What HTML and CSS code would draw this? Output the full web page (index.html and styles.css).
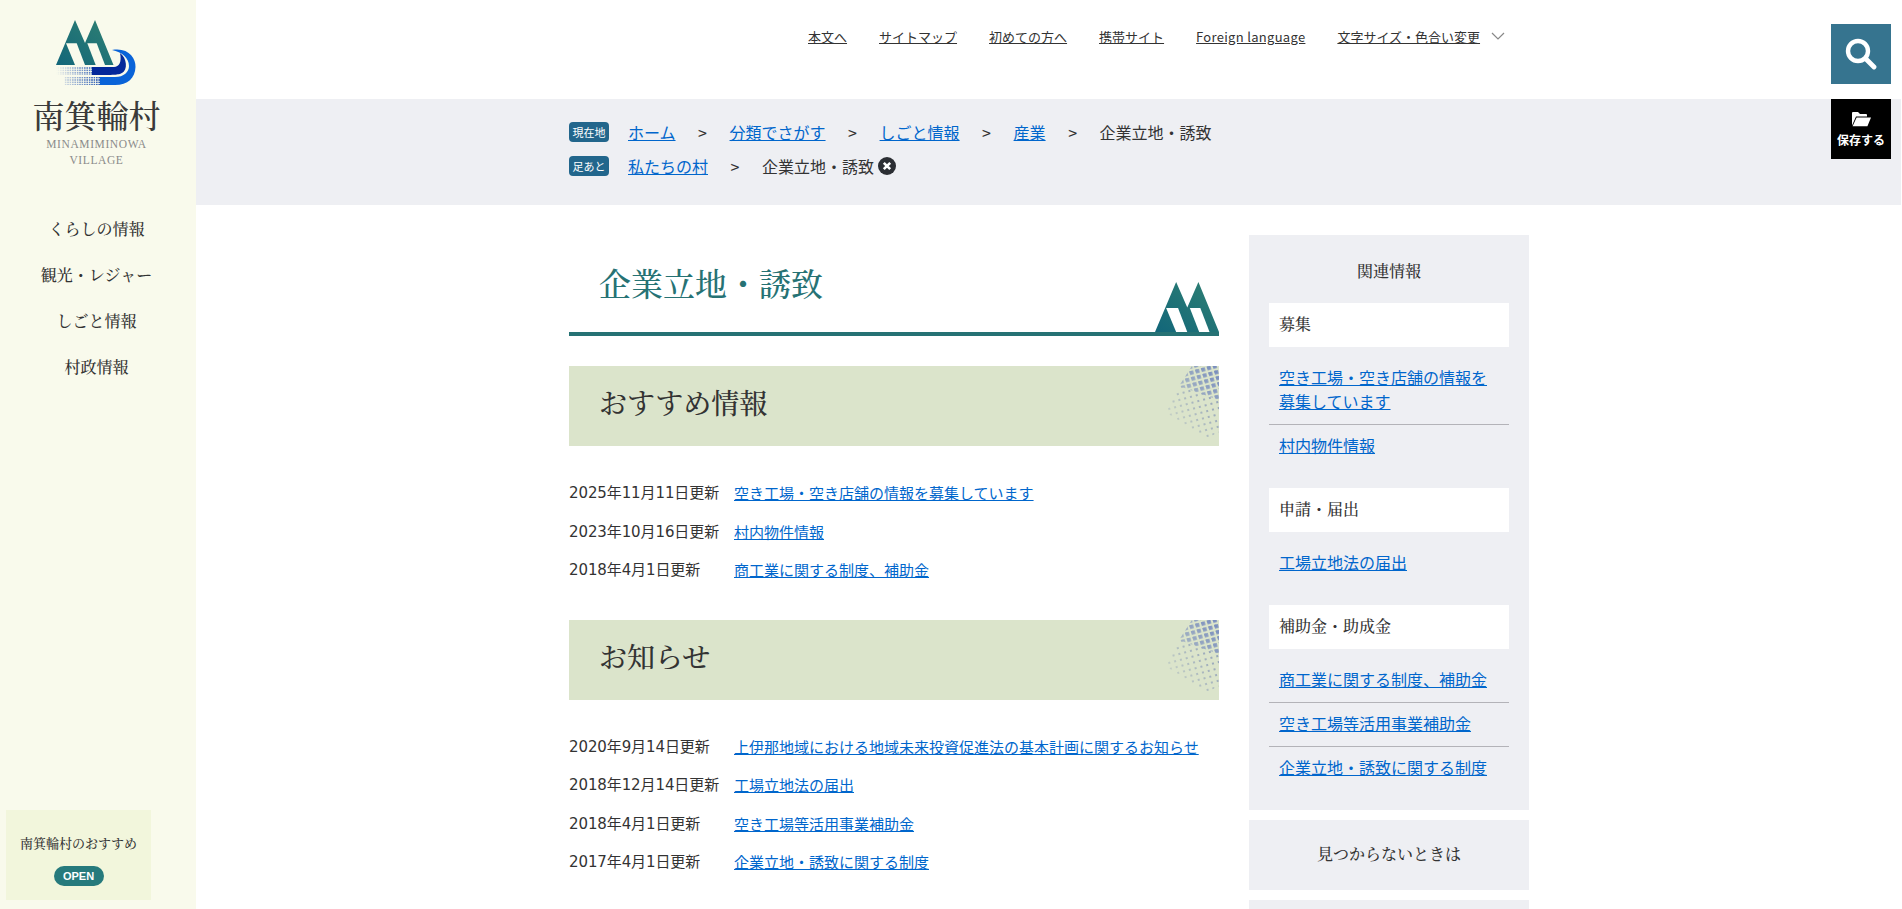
FILE: index.html
```html
<!DOCTYPE html>
<html lang="ja">
<head>
    <meta charset="UTF-8">
    <title>企業立地・誘致 | 南箕輪村</title>
    <link rel="stylesheet" href="styles.css">
</head>
<body>
    <aside class="side">
        <a class="logo" href="#">
            <svg class="logo-mark" viewBox="56 18 80 68">
                <defs>
                    <linearGradient id="teal" x1="0" y1="1" x2="1" y2="0">
                        <stop offset="0" stop-color="#12667a"/>
                        <stop offset="1" stop-color="#2f8072"/>
                    </linearGradient>
                    <linearGradient id="fade" x1="0" y1="0" x2="1" y2="0">
                        <stop offset="0" stop-color="#000"/>
                        <stop offset="1" stop-color="#fff"/>
                    </linearGradient>
                    <pattern id="dots" width="2.4" height="2.4" patternUnits="userSpaceOnUse">
                        <rect width="1.6" height="1.6" fill="#1d4fb0"/>
                    </pattern>
                    <mask id="dotmask" maskUnits="userSpaceOnUse" x="56" y="66" width="46" height="20">
                        <rect x="56" y="66" width="46" height="20" fill="url(#fade)"/>
                    </mask>
                    <linearGradient id="corner" x1="1" y1="0" x2="0" y2="1">
                        <stop offset="0" stop-color="#fff"/>
                        <stop offset="1" stop-color="#000"/>
                    </linearGradient>
                    <pattern id="ht-big" width="6" height="6" patternUnits="userSpaceOnUse" patternTransform="rotate(-15)">
                        <rect width="3.8" height="3.8" fill="#7489bd"/>
                    </pattern>
                    <pattern id="ht-small" width="6" height="6" patternUnits="userSpaceOnUse" patternTransform="rotate(-15)">
                        <rect width="2" height="2" fill="#7f90b4"/>
                    </pattern>
                    <mask id="ht-mask" maskUnits="userSpaceOnUse" x="0" y="0" width="56" height="80">
                        <rect width="56" height="80" fill="url(#corner)"/>
                    </mask>
                </defs>
                <polygon points="56,65 75,20 85,43 95,20 113.5,65" fill="url(#teal)"/>
                <polygon points="66,43.3 76.7,43.3 85,65 75,65" fill="#f9faec"/>
                <polygon points="87.3,43.3 96.7,43.3 105,65 95.7,65" fill="#f9faec"/>
                <rect x="56" y="67" width="37" height="8" fill="url(#dots)" mask="url(#dotmask)"/>
                <rect x="64" y="77" width="37" height="8" fill="url(#dots)" mask="url(#dotmask)"/>
                <path d="M112 50C128 47 136 58 135.500 67C135 78 128 85 115 85L100 85L100 77L115 77C124 77 129 72 129 66C129 58 122 52 112 50Z" fill="#0a63d8"/>
                <path d="M92 67L114 67C119 67 122 62 120 53C127 58 128 70 122 73C118 75 115 75 92 75Z" fill="#04289a"/>
            </svg>
            <span class="logo-name">南箕輪村</span>
            <span class="logo-en">MINAMIMINOWA<br>VILLAGE</span>
        </a>
        <nav class="side-nav">
            <a href="#">くらしの情報</a>
            <a href="#">観光・レジャー</a>
            <a href="#">しごと情報</a>
            <a href="#">村政情報</a>
        </nav>
        <div class="osusume">
            <p>南箕輪村のおすすめ</p>
            <span class="open">OPEN</span>
        </div>
    </aside>

    <div class="page">
        <header class="head">
            <a href="#">本文へ</a>
            <a href="#">サイトマップ</a>
            <a href="#">初めての方へ</a>
            <a href="#">携帯サイト</a>
            <a class="latin" href="#">Foreign language</a>
            <span class="head-last">
                <a href="#">文字サイズ・色合い変更</a>
                <svg class="chevron" viewBox="0 0 14 8" fill="none" stroke="#888" stroke-width="1.2"><polyline points="1 1 7 7 13 1"/></svg>
            </span>
        </header>

        <div class="crumbs">
            <div class="crumb-row">
                <span class="badge">現在地</span>
                <a href="#">ホーム</a><i>&gt;</i>
                <a href="#">分類でさがす</a><i>&gt;</i>
                <a href="#">しごと情報</a><i>&gt;</i>
                <a href="#">産業</a><i>&gt;</i>
                <span>企業立地・誘致</span>
            </div>
            <div class="crumb-row">
                <span class="badge">足あと</span>
                <a href="#">私たちの村</a><i>&gt;</i>
                <span>企業立地・誘致</span>
                <svg class="close" viewBox="0 0 18 18">
                    <circle cx="9" cy="9" r="9" fill="#2b2e33"/>
                    <path d="M5.8 5.8l6.4 6.4M12.2 5.8l-6.4 6.4" stroke="#fff" stroke-width="2.6"/>
                </svg>
            </div>
        </div>

        <div class="content">
            <main class="main">
                <h1 class="title">
                    <span>企業立地・誘致</span>
                    <svg class="title-mark" viewBox="56 20 57.5 45" preserveAspectRatio="none">
                        <polygon points="56,65 75,20 85,43 95,20 113.5,65" fill="url(#teal)"/>
                        <polygon points="66,43.3 76.7,43.3 85,65 75,65" fill="#fff"/>
                        <polygon points="87.3,43.3 96.7,43.3 105,65 95.7,65" fill="#fff"/>
                    </svg>
                </h1>

                <h2 class="band">
                    おすすめ情報
                    <svg class="halftone" viewBox="0 0 56 80">
                        <g mask="url(#ht-mask)">
                            <polygon points="29,0 56,0 56,66 44,72 2,46" fill="url(#ht-small)"/>
                            <polygon points="29,0 56,0 56,34 16,20" fill="url(#ht-big)"/>
                        </g>
                    </svg>
                </h2>
                <ul class="news">
                    <li><span>2025年11月11日更新</span><a href="#">空き工場・空き店舗の情報を募集しています</a></li>
                    <li><span>2023年10月16日更新</span><a href="#">村内物件情報</a></li>
                    <li><span>2018年4月1日更新</span><a href="#">商工業に関する制度、補助金</a></li>
                </ul>

                <h2 class="band">
                    お知らせ
                    <svg class="halftone" viewBox="0 0 56 80">
                        <g mask="url(#ht-mask)">
                            <polygon points="29,0 56,0 56,66 44,72 2,46" fill="url(#ht-small)"/>
                            <polygon points="29,0 56,0 56,34 16,20" fill="url(#ht-big)"/>
                        </g>
                    </svg>
                </h2>
                <ul class="news">
                    <li><span>2020年9月14日更新</span><a href="#">上伊那地域における地域未来投資促進法の基本計画に関するお知らせ</a></li>
                    <li><span>2018年12月14日更新</span><a href="#">工場立地法の届出</a></li>
                    <li><span>2018年4月1日更新</span><a href="#">空き工場等活用事業補助金</a></li>
                    <li><span>2017年4月1日更新</span><a href="#">企業立地・誘致に関する制度</a></li>
                </ul>
            </main>

            <div class="rail">
                <section class="panel">
                    <h2 class="panel-title">関連情報</h2>
                    <h3 class="panel-head">募集</h3>
                    <ul class="panel-list">
                        <li><a href="#">空き工場・空き店舗の情報を募集しています</a></li>
                        <li><a href="#">村内物件情報</a></li>
                    </ul>
                    <h3 class="panel-head">申請・届出</h3>
                    <ul class="panel-list">
                        <li><a href="#">工場立地法の届出</a></li>
                    </ul>
                    <h3 class="panel-head">補助金・助成金</h3>
                    <ul class="panel-list">
                        <li><a href="#">商工業に関する制度、補助金</a></li>
                        <li><a href="#">空き工場等活用事業補助金</a></li>
                        <li><a href="#">企業立地・誘致に関する制度</a></li>
                    </ul>
                </section>
                <section class="panel-small">見つからないときは</section>
                <section class="panel-rest"></section>
            </div>
        </div>
    </div>

    <a class="btn-search" href="#" aria-label="検索">
        <svg viewBox="0 0 32 32" fill="none" stroke="#fff">
            <circle cx="13" cy="13" r="10" stroke-width="4.4"/>
            <line x1="21" y1="21" x2="29" y2="29" stroke-width="4.8" stroke-linecap="round"/>
        </svg>
    </a>
    <a class="btn-save" href="#">
        <svg viewBox="0 0 20 16" fill="#fff">
            <path d="M1 14.5V2a1 1 0 0 1 1-1h5l2 2h6a1 1 0 0 1 1 1v1.5H5L1 14.5z"/>
            <path d="M5.6 6.6H20l-3.6 8.6H1.6z"/>
        </svg>
        保存する
    </a>
</body>
</html>
```

FILE: styles.css
```css
* {
    box-sizing: border-box;
}

html, body {
    height: 909px;
    overflow: hidden;
}

body {
    display: flex;
    margin: 0;
    background-color: #fff;
    color: #333;
    font-family: "Noto Sans CJK JP", "Noto Sans", sans-serif;
    font-size: 15px;
}

a {
    color: #0066cc;
}

ul {
    margin: 0;
    padding: 0;
    list-style: none;
}

/* 左サイド */
.side {
    display: flex;
    flex-direction: column;
    align-items: center;
    flex: none;
    width: 196px;
    height: 909px;
    padding-right: 3px;
    background-color: #f9faec;
    font-family: "Noto Serif CJK JP", "Liberation Serif", "Noto Sans CJK JP", serif;
}

.logo {
    display: flex;
    flex-direction: column;
    align-items: center;
    padding-top: 18px;
    color: #333;
    text-decoration: none;
}

.logo-mark {
    width: 80px;
    height: 68px;
}

.logo-name {
    margin-top: 8px;
    font-size: 32px;
    font-weight: 500;
    line-height: 40px;
    color: #3a3a3a;
}

.logo-en {
    margin-top: 2px;
    font-family: "Liberation Serif", serif;
    font-size: 11.5px;
    line-height: 16px;
    letter-spacing: 0.6px;
    text-align: center;
    color: #8a8a8a;
}

.side-nav {
    display: flex;
    flex-direction: column;
    align-items: center;
    margin-top: 38px;
}

.side-nav a {
    height: 46px;
    font-size: 16px;
    font-weight: 500;
    line-height: 46px;
    color: #333;
    text-decoration: none;
}

.osusume {
    align-self: flex-start;
    margin: auto 0 9px 6px;
    width: 145px;
    height: 90px;
    padding-top: 23px;
    background-color: #f2f6dc;
    text-align: center;
}

.osusume p {
    margin: 0 0 10px;
    font-size: 13px;
    font-weight: 500;
    line-height: 20px;
    color: #333;
}

.open {
    display: inline-block;
    width: 50px;
    height: 20px;
    border-radius: 10px;
    background-color: #267a7c;
    color: #fff;
    font-family: "Liberation Sans", sans-serif;
    font-size: 11px;
    font-weight: bold;
    line-height: 20px;
}

/* 右側 */
.page {
    flex: 1;
    min-width: 0;
}

.head {
    display: flex;
    align-items: center;
    gap: 32px;
    height: 99px;
    padding: 0 0 27px 612px;
    font-size: 13px;
}

.head a {
    color: #333;
}

.head .latin {
    letter-spacing: 0.3px;
}

.head-last {
    display: flex;
    align-items: center;
    gap: 11px;
}

.chevron {
    width: 14px;
    height: 8px;
}

.crumbs {
    display: flex;
    flex-direction: column;
    gap: 6px;
    height: 106px;
    margin-right: 1px;
    padding: 19px 0 0 373px;
    background-color: #eeeff3;
    font-size: 16px;
}

.crumb-row {
    display: flex;
    align-items: center;
    height: 28px;
}

.crumb-row i {
    width: 54px;
    font-style: normal;
    text-align: center;
}

.badge {
    width: 40px;
    height: 20px;
    margin-right: 19px;
    border-radius: 4px;
    background-color: #22668c;
    color: #fff;
    font-size: 11px;
    line-height: 20px;
    text-align: center;
}

.close {
    width: 18px;
    height: 18px;
    margin-left: 4px;
}

.content {
    display: flex;
    gap: 30px;
    padding: 30px 0 0 373px;
}

.main {
    width: 650px;
}

.title {
    display: flex;
    justify-content: space-between;
    align-items: flex-end;
    height: 101px;
    margin: 0 0 30px;
    border-bottom: 4px solid #267274;
    color: #267274;
    font-family: "Noto Serif CJK JP", "Liberation Serif", "Noto Sans CJK JP", serif;
    font-size: 32px;
    font-weight: 500;
}

.title span {
    align-self: flex-start;
    padding: 24px 0 0 30px;
    line-height: 46px;
}

.title-mark {
    width: 64px;
    height: 50px;
}

.band {
    position: relative;
    height: 80px;
    margin: 0 0 28px;
    padding-left: 30px;
    background-color: #dbe4cb;
    font-family: "Noto Serif CJK JP", "Liberation Serif", "Noto Sans CJK JP", serif;
    font-size: 28px;
    font-weight: 500;
    line-height: 72px;
}

/* 右上の網点 */
.halftone {
    position: absolute;
    top: 0;
    right: 0;
    width: 56px;
    height: 80px;
}

.news {
    margin-bottom: 30px;
}

.news li {
    display: flex;
    height: 38.5px;
    line-height: 38.5px;
}

.news span {
    flex: none;
    width: 165px;
    font-family: "DejaVu Sans", "Noto Sans CJK JP", sans-serif;
    letter-spacing: -0.1px;
}

/* 関連情報 */
.rail {
    display: flex;
    flex-direction: column;
    gap: 10px;
    width: 280px;
}

.panel {
    height: 575px;
    padding: 0 20px;
    background-color: #eeeff3;
}

.panel-title {
    margin: 0 0 10px;
    height: 58px;
    font-family: "Noto Serif CJK JP", "Liberation Serif", "Noto Sans CJK JP", serif;
    font-size: 16px;
    font-weight: 500;
    line-height: 72px;
    text-align: center;
}

.panel-head {
    height: 44px;
    margin: 0;
    padding-left: 10px;
    background-color: #fff;
    font-family: "Noto Serif CJK JP", "Liberation Serif", "Noto Sans CJK JP", serif;
    font-size: 16px;
    font-weight: 500;
    line-height: 42px;
}

.panel-list {
    margin: 10px 0 20px;
    font-size: 16px;
}

.panel-list li {
    padding: 8px 20px 11px 10px;
    border-top: 1px solid #b3b3b8;
    line-height: 24px;
}

.panel-list li:first-child {
    border-top: none;
}

.panel-small {
    height: 70px;
    background-color: #eeeff3;
    font-family: "Noto Serif CJK JP", "Liberation Serif", "Noto Sans CJK JP", serif;
    font-size: 16px;
    font-weight: 500;
    line-height: 68px;
    text-align: center;
}

.panel-rest {
    height: 9px;
    background-color: #eeeff3;
}

/* 右上の固定ボタン */
.btn-search, .btn-save {
    position: absolute;
    left: 1831px;
    display: flex;
    align-items: center;
    justify-content: center;
    width: 60px;
    height: 60px;
}

.btn-search {
    top: 24px;
    background-color: #36748f;
}

.btn-search svg {
    width: 32px;
    height: 32px;
}

.btn-save {
    top: 99px;
    flex-direction: column;
    gap: 4px;
    background-color: #000;
    color: #fff;
    font-size: 12px;
    font-weight: bold;
    text-decoration: none;
}

.btn-save svg {
    width: 20px;
    height: 16px;
}
```
